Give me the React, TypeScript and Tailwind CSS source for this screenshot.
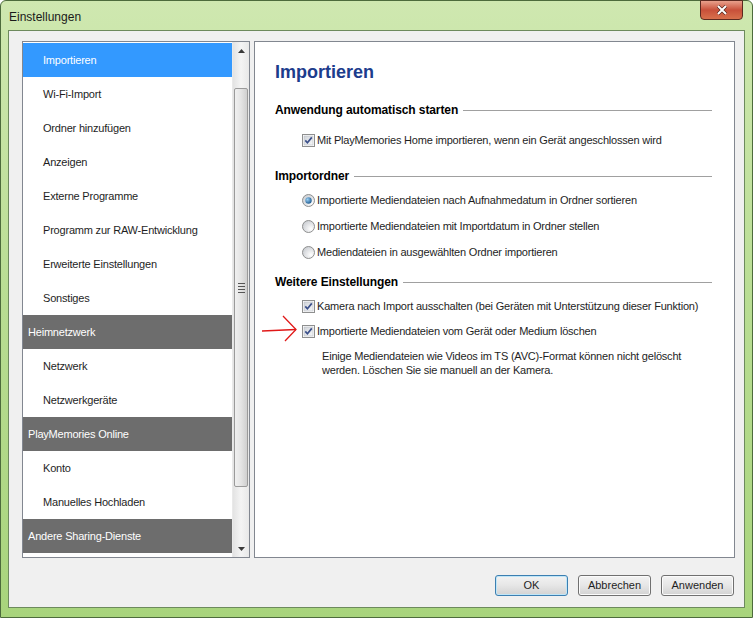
import React from "react";

const font = "font-['Liberation_Sans',Arial,sans-serif]";

type Row = { label: string; kind: "item" | "header"; active?: boolean };

const rows: Row[] = [
  { label: "Importieren", kind: "item", active: true },
  { label: "Wi-Fi-Import", kind: "item" },
  { label: "Ordner hinzufügen", kind: "item" },
  { label: "Anzeigen", kind: "item" },
  { label: "Externe Programme", kind: "item" },
  { label: "Programm zur RAW-Entwicklung", kind: "item" },
  { label: "Erweiterte Einstellungen", kind: "item" },
  { label: "Sonstiges", kind: "item" },
  { label: "Heimnetzwerk", kind: "header" },
  { label: "Netzwerk", kind: "item" },
  { label: "Netzwerkgeräte", kind: "item" },
  { label: "PlayMemories Online", kind: "header" },
  { label: "Konto", kind: "item" },
  { label: "Manuelles Hochladen", kind: "item" },
  { label: "Andere Sharing-Dienste", kind: "header" },
];

function CheckBox() {
  return (
    <svg width="13" height="13" viewBox="0 0 13 13" className="shrink-0">
      <defs>
        <linearGradient id="cbg" x1="0" y1="0" x2="1" y2="1">
          <stop offset="0" stopColor="#cfd3d8" />
          <stop offset="1" stopColor="#f7f8fa" />
        </linearGradient>
      </defs>
      <rect x="0.5" y="0.5" width="12" height="12" fill="#fff" stroke="#8e8f8f" />
      <rect x="2" y="2" width="9" height="9" fill="url(#cbg)" stroke="#b8bcc2" strokeWidth="0.6" />
      <path d="M3.3 6.4 L5.4 8.8 L9.8 3.4" fill="none" stroke="#3b4f8a" strokeWidth="1.7" />
    </svg>
  );
}

function Radio({ on }: { on?: boolean }) {
  return (
    <svg width="13" height="13" viewBox="0 0 13 13" className="shrink-0">
      <defs>
        <radialGradient id="rbg" cx="0.7" cy="0.7" r="0.8">
          <stop offset="0" stopColor="#ffffff" />
          <stop offset="1" stopColor="#c9ccd1" />
        </radialGradient>
        <radialGradient id="rdot" cx="0.35" cy="0.35" r="0.7">
          <stop offset="0" stopColor="#9ad0f5" />
          <stop offset="1" stopColor="#1e5a8f" />
        </radialGradient>
      </defs>
      <circle cx="6.5" cy="6.5" r="6" fill="url(#rbg)" stroke="#8e8f8f" />
      {on && <circle cx="6.5" cy="6.5" r="3.2" fill="url(#rdot)" />}
    </svg>
  );
}

function Section({ title }: { title: string }) {
  return (
    <div className="flex items-center h-4">
      <span className="text-[12px] font-bold text-black whitespace-nowrap tracking-[-0.1px]">{title}</span>
      <div className="flex-1 h-px bg-[#a0a0a0] ml-[5px] mr-[22px]" />
    </div>
  );
}

function Option({ children, radio, on }: { children: React.ReactNode; radio?: boolean; on?: boolean }) {
  return (
    <div className="flex items-center h-4 pl-[27px] gap-[2px] text-[11px] tracking-[-0.2px] text-[#1e1e1e] whitespace-nowrap">
      {radio ? <Radio on={on} /> : <CheckBox />}
      <span>{children}</span>
    </div>
  );
}

function WinButton({ label, def }: { label: string; def?: boolean }) {
  return (
    <button
      className={`w-[73px] h-[21px] rounded-[3px] text-[11px] text-[#1e1e1e] border bg-gradient-to-b from-[#f3f3f3] via-[#e6e6e6] to-[#d2d2d2] ${
        def ? "border-[#3c7fb1] shadow-[inset_0_0_0_1px_#bfe6f8]" : "border-[#707070] shadow-[inset_0_0_0_1px_#fbfbfb]"
      }`}
    >
      {label}
    </button>
  );
}

export default function App() {
  return (
    <div className={`${font} w-[753px] h-[618px] bg-white`}>
      <div className="w-[753px] h-[618px] flex flex-col rounded-t-[6px] border border-[#4d6b3c] bg-gradient-to-b from-[#cfe8b0] via-[#b8dd92] to-[#a8d47c]">
        {/* Title bar */}
        <div className="h-[29px] flex items-start shrink-0">
          <span className="mt-[7px] ml-[8px] text-[12px] text-[#1a1a1a]">Einstellungen</span>
          <div className="ml-auto mr-[9px] mt-[-1px] w-[43px] h-[20px] rounded-b-[4px] border border-[#5b2a20] bg-gradient-to-b from-[#e8a08c] via-[#c8503a] to-[#d8704c] flex items-center justify-center">
            <svg width="12" height="10" viewBox="0 0 12 10">
              <path d="M2 1 L10 9 M10 1 L2 9" stroke="#4a2018" strokeWidth="3.2" />
              <path d="M2 1 L10 9 M10 1 L2 9" stroke="#ffffff" strokeWidth="2" />
            </svg>
          </div>
        </div>

        {/* Client area */}
        <div className="flex-1 mx-[7px] mb-[9px] bg-[#f0f0f0] border border-[#6d8a5d] flex flex-col pt-[10px] pl-[13px] pr-[9px]">
          <div className="flex gap-[4px] h-[517px]">
            {/* Navigation list */}
            <div className="w-[228px] border border-[#828790] bg-white flex">
              <div className="flex-1 pt-px">
                {rows.map((r) => (
                  <div
                    key={r.label}
                    className={`h-[34px] flex items-center text-[11px] tracking-[-0.2px] whitespace-nowrap ${
                      r.kind === "header"
                        ? "bg-[#6d6d6d] text-white pl-[5px]"
                        : r.active
                        ? "bg-[#3399ff] text-white pl-[20px]"
                        : "text-[#1e1e1e] pl-[20px]"
                    }`}
                  >
                    {r.label}
                  </div>
                ))}
              </div>
              {/* Scrollbar */}
              <div className="w-[17px] flex flex-col bg-gradient-to-r from-[#e3e3e3] via-[#f4f4f4] to-[#e8e8e8] border-l border-[#e9e9e9]">
                <div className="h-[17px] flex items-center justify-center">
                  <svg width="7" height="4" viewBox="0 0 7 4">
                    <path d="M0 4 L3.5 0 L7 4 Z" fill="#3a3a3a" />
                  </svg>
                </div>
                <div className="flex-1 flex flex-col">
                  <div className="mt-[29px] h-[399px] mx-[1px] rounded-[2px] border border-[#9a9a9a] bg-gradient-to-r from-[#f0f0f0] via-[#e4e4e4] to-[#cfcfcf] flex flex-col items-center justify-center gap-[2px]">
                    <div className="w-[7px] h-px bg-[#555]" />
                    <div className="w-[7px] h-px bg-[#555]" />
                    <div className="w-[7px] h-px bg-[#555]" />
                    <div className="w-[7px] h-px bg-[#555]" />
                  </div>
                </div>
                <div className="h-[17px] flex items-center justify-center">
                  <svg width="7" height="4" viewBox="0 0 7 4">
                    <path d="M0 0 L7 0 L3.5 4 Z" fill="#3a3a3a" />
                  </svg>
                </div>
              </div>
            </div>

            {/* Settings panel */}
            <div className="flex-1 border border-[#828790] bg-white pl-[20px] pt-[19px]">
              <h1 className="text-[18px] leading-[22px] font-bold text-[#1c3c8c]">Importieren</h1>

              <div className="mt-[19px]">
                <Section title="Anwendung automatisch starten" />
              </div>
              <div className="mt-[14px]">
                <Option>Mit PlayMemories Home importieren, wenn ein Gerät angeschlossen wird</Option>
              </div>

              <div className="mt-[20px]">
                <Section title="Importordner" />
              </div>
              <div className="mt-[8px] flex flex-col gap-[10px]">
                <Option radio on>
                  Importierte Mediendateien nach Aufnahmedatum in Ordner sortieren
                </Option>
                <Option radio>Importierte Mediendateien mit Importdatum in Ordner stellen</Option>
                <Option radio>Mediendateien in ausgewählten Ordner importieren</Option>
              </div>

              <div className="mt-[14px]">
                <Section title="Weitere Einstellungen" />
              </div>
              <div className="mt-[8px] flex flex-col gap-[9px]">
                <Option>Kamera nach Import ausschalten (bei Geräten mit Unterstützung dieser Funktion)</Option>
                <div className="relative">
                  <Option>Importierte Mediendateien vom Gerät oder Medium löschen</Option>
                  <svg
                    className="absolute left-[-13px] top-[-8px]"
                    width="36"
                    height="27"
                    viewBox="0 0 36 27"
                  >
                    <path d="M0 16 C10 15.5 22 15 34 14.5" fill="none" stroke="#e01818" strokeWidth="1.3" />
                    <path d="M21 1 L34 14.5 L23 26" fill="none" stroke="#e01818" strokeWidth="1.3" />
                  </svg>
                </div>
              </div>
              <p className="mt-[10px] pl-[47px] text-[11px] tracking-[-0.2px] leading-[14px] text-[#1e1e1e]">
                Einige Mediendateien wie Videos im TS (AVC)-Format können nicht gelöscht
                <br />
                werden. Löschen Sie sie manuell an der Kamera.
              </p>
            </div>
          </div>

          {/* Buttons */}
          <div className="mt-[17px] mr-[1px] flex justify-end gap-[10px]">
            <WinButton label="OK" def />
            <WinButton label="Abbrechen" />
            <WinButton label="Anwenden" />
          </div>
        </div>
      </div>
    </div>
  );
}
